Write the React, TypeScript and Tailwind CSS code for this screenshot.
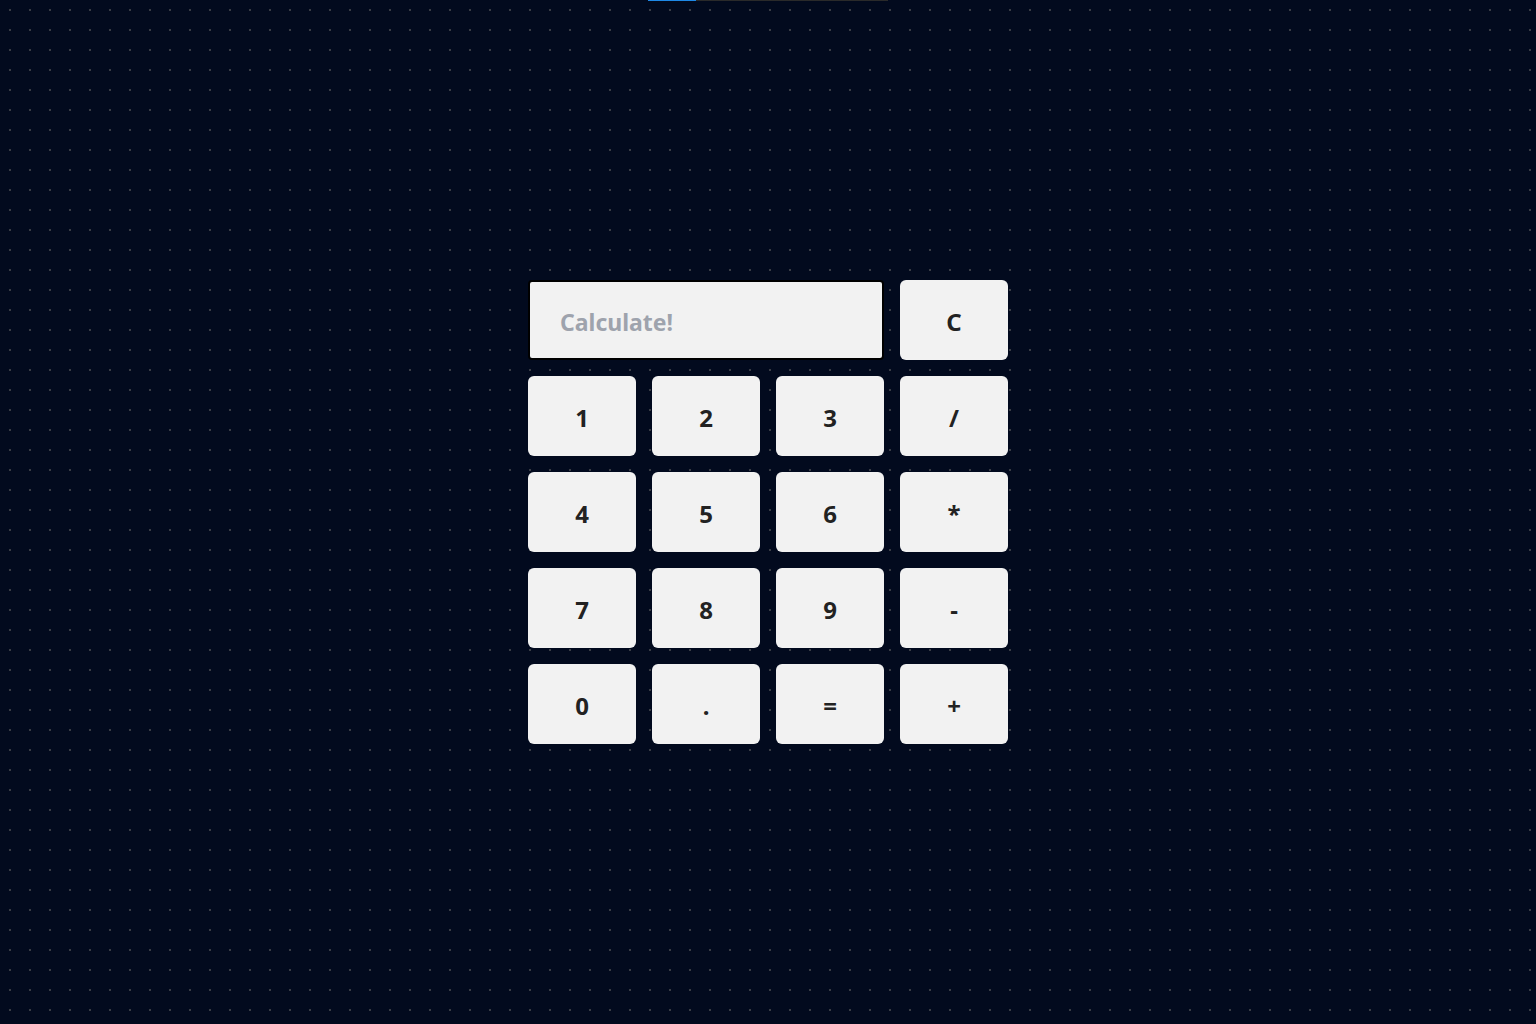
import React, { useState } from 'react';

const keys = ['1', '2', '3', '/', '4', '5', '6', '*', '7', '8', '9', '-', '0', '.', '=', '+'];

const App: React.FC = () => {
  const [value, setValue] = useState('');

  const press = (k: string) => {
    if (k === '=') {
      try {
        // eslint-disable-next-line no-new-func
        setValue(String(Function(`return (${value})`)()));
      } catch {
        setValue('');
      }
      return;
    }
    setValue((v) => v + k);
  };

  return (
    <div
      className="relative min-h-screen w-full bg-[#020a1e] bg-[radial-gradient(#3a3d45_1px,transparent_1px)] bg-[size:20px_20px] flex items-center justify-center"
      style={{ fontFamily: '"Noto Sans", "Open Sans", sans-serif' }}
    >
      <div className="absolute top-0 left-[648px] w-[240px] h-px bg-[#2a2a2a]">
        <div className="w-[48px] h-px bg-[#1e88e5]" />
      </div>

      <div className="grid grid-cols-[repeat(4,108px)] auto-rows-[80px] gap-4">
        <input
          value={value}
          onChange={(e) => setValue(e.target.value)}
          placeholder="Calculate!"
          className="col-span-3 h-full w-full rounded-[4px] border-2 border-black bg-[#f2f2f2] px-[30px] pt-[3px] text-[23px] font-bold text-[#222] placeholder:text-[#9ea3ad] outline-none"
        />
        <button
          onClick={() => setValue('')}
          className="rounded-[6px] bg-[#f2f2f2] pt-[3px] text-[24px] font-bold text-[#222]"
        >
          C
        </button>
        {keys.map((k) => (
          <button
            key={k}
            onClick={() => press(k)}
            className="rounded-[6px] bg-[#f2f2f2] pt-[3px] text-[24px] font-bold text-[#222]"
          >
            {k}
          </button>
        ))}
      </div>
    </div>
  );
};

export default App;
